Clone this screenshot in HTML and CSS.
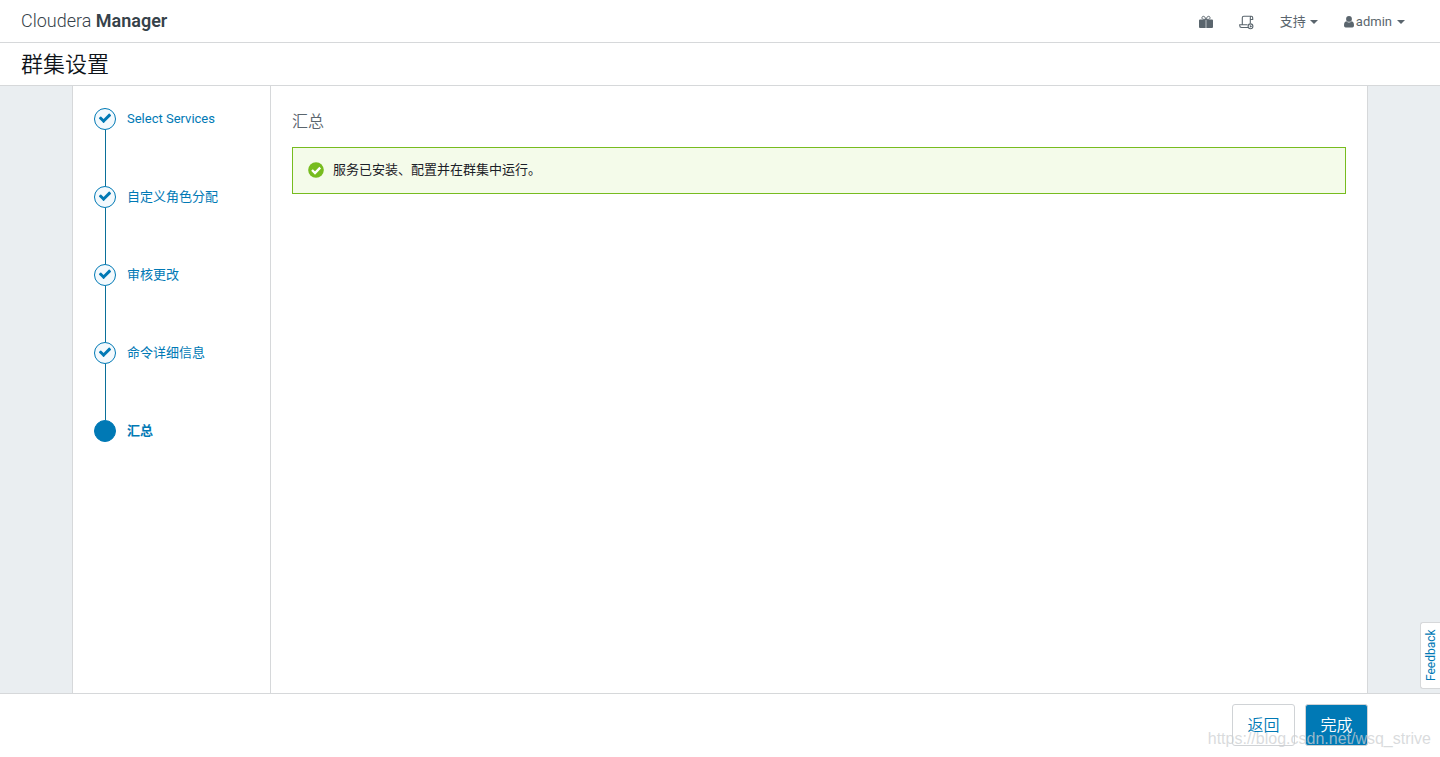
FILE: index.html
```
<!DOCTYPE html>
<html lang="zh-CN">
<head>
<meta charset="utf-8">
<title>群集设置 - Cloudera Manager</title>
<link rel="stylesheet" href="styles.css">
</head>
<body>
<svg class="sprite" aria-hidden="true">
  <symbol id="check" viewBox="0 0 1792 1792"><path d="M1671 566q0 40-28 68l-724 724-136 136q-28 28-68 28t-68-28l-136-136-362-362q-28-28-28-68t28-68l136-136q28-28 68-28t68 28l294 295 656-657q28-28 68-28t68 28l136 136q28 28 28 68z"/></symbol>
</svg>
<header class="topbar">
  <a class="brand" href="#">Cloudera <strong>Manager</strong></a>
  <nav class="tools">
    <button class="tool tool-gift" type="button" aria-label="Parcel">
      <svg width="14" height="14" viewBox="0 0 14 14" aria-hidden="true"><path fill="currentColor" d="M0 5.6Q0 4.500 1 4.500H6.700V13H1Q0 13 0 12ZM7.300 4.500H13Q14 4.500 14 5.600V12Q14 13 13 13H7.300Z"/><path fill="none" stroke="currentColor" d="M7 4.500C6.500 2.500 5.500 1.300 4.300 1.300C2.500 1.300 2.500 4.300 4.500 4.300H9.500C11.500 4.300 11.500 1.300 9.700 1.300C8.500 1.300 7.500 2.500 7 4.500Z"/></svg>
    </button>
    <button class="tool tool-cmd" type="button" aria-label="Commands">
      <svg width="15" height="15" viewBox="0 0 15 15" aria-hidden="true"><g fill="none" stroke="currentColor" stroke-width="1.1"><path d="M3.300 9.500V2.800Q3.300 1.300 4.800 1.300H12.300Q13.700 1.300 13.700 2.800V4.500H11.300V2.800Q11.300 1.300 12.300 1.300M11.300 4.500V8.500M8.500 9.700H.7V10.500Q.7 12.500 2.500 12.500H9"/><circle cx="11.500" cy="11.300" r="2.400"/></g><path fill="currentColor" d="M10.800 9.900 13.300 11.300 10.800 12.700Z"/></svg>
    </button>
    <button class="tool tool-support" type="button">支持<span class="caret"></span></button>
    <button class="tool tool-user" type="button">
      <svg width="10" height="12" viewBox="0 0 10 12" aria-hidden="true"><path fill="currentColor" d="M5 0A2.900 2.900 0 1 1 5 5.800 2.900 2.900 0 0 1 5 0ZM2.300 5.200Q5 7.600 7.700 5.200Q10 5.500 10 9.500Q10 11.500 8.300 11.500H1.700Q0 11.500 0 9.500Q0 5.500 2.300 5.200Z"/></svg>
      <span>admin</span><span class="caret"></span>
    </button>
  </nav>
</header>
<div class="titlebar"><h1>群集设置</h1></div>
<div class="stage">
  <div class="wizard">
    <aside class="sidebar">
      <ol class="steps">
        <li class="step"><span class="dot"><svg viewBox="0 0 1792 1792"><use href="#check"/></svg></span><a href="#">Select Services</a></li>
        <li class="step"><span class="dot"><svg viewBox="0 0 1792 1792"><use href="#check"/></svg></span><a href="#">自定义角色分配</a></li>
        <li class="step"><span class="dot"><svg viewBox="0 0 1792 1792"><use href="#check"/></svg></span><a href="#">审核更改</a></li>
        <li class="step"><span class="dot"><svg viewBox="0 0 1792 1792"><use href="#check"/></svg></span><a href="#">命令详细信息</a></li>
        <li class="step current"><span class="dot"></span><a href="#" aria-current="step">汇总</a></li>
      </ol>
    </aside>
    <main class="content">
      <h2>汇总</h2>
      <div class="alert" role="status">
        <svg width="16" height="16" viewBox="0 0 16 16" aria-hidden="true"><circle cx="8" cy="8" r="7.800" fill="#77bc1f"/><path d="M4 8 7 11 12.200 5.700" fill="none" stroke="#fff" stroke-width="2.400"/></svg>
        <span>服务已安装、配置并在群集中运行。</span>
      </div>
    </main>
  </div>
  <button class="feedback" type="button">Feedback</button>
</div>
<footer class="actions">
  <button class="btn" type="button">返回</button>
  <button class="btn primary" type="button">完成</button>
  <span class="watermark">https://blog.csdn.net/wsq_strive</span>
</footer>
</body>
</html>
```
FILE: styles.css
```
* { box-sizing: border-box; }
body {
  margin: 0;
  min-height: 100vh;
  display: flex;
  flex-direction: column;
  background: #fff;
  color: #1b2027;
  font: 13px/20px Roboto, "Noto Sans CJK SC", sans-serif;
}
button { font: inherit; color: inherit; background: none; border: 0; padding: 0; cursor: pointer; }
a { color: inherit; text-decoration: none; }
.sprite { position: absolute; width: 0; height: 0; }

.topbar {
  display: flex;
  align-items: center;
  justify-content: space-between;
  height: 43px;
  padding: 0 35px 0 21px;
  border-bottom: 1px solid #d6d8da;
}
.brand { color: #36424a; font-size: 18px; font-weight: 300; }
.brand strong { font-weight: 600; }
.tools { display: flex; align-items: center; gap: 26px; padding-top: 2px; color: #5a656d; }
.tool { display: flex; align-items: center; }
.tool-user { gap: 2px; }
.caret {
  margin-left: 4px;
  border: 4px solid transparent;
  border-top-color: currentColor;
  border-bottom: 0;
}
.tool-user .caret { margin-left: 3px; }

.titlebar { padding: 1px 21px 0; border-bottom: 1px solid #d6d8da; }
.titlebar h1 { margin: 0; font-size: 22px; line-height: 41px; font-weight: 350; color: #0f141a; }

.stage { position: relative; flex: 1; display: flex; padding: 0 5%; background: #eaeef1; }
.wizard { flex: 1; display: flex; background: #fff; border: solid #d6d8da; border-width: 0 1px; }
.sidebar { width: 198px; padding: 22px 21px; border-right: 1px solid #d6d8da; }
.steps { margin: 0; padding: 0; list-style: none; }
.step {
  position: relative;
  display: flex;
  gap: 11px;
  height: 78px;
  color: #0079b5;
  line-height: 22px;
}
.step::before {
  content: "";
  position: absolute;
  top: 22px;
  bottom: 0;
  left: 11px;
  width: 1px;
  background: #0b7099;
}
.step:last-child::before { display: none; }
.dot {
  display: grid;
  place-items: center;
  width: 22px;
  height: 22px;
  border: 1px solid #0079b5;
  border-radius: 50%;
  background: #f3f9fd;
}
.dot svg { width: 14px; height: 14px; margin-bottom: 2px; fill: #0079b5; }
.current { font-weight: 700; }
.current .dot { background: #0079b5; }

.content { flex: 1; padding: 26px 21px; }
.content h2 { margin: 0 0 15px; color: #5a656d; font-size: 16px; line-height: 20px; font-weight: 350; }
.alert {
  display: flex;
  align-items: center;
  gap: 9px;
  padding: 12px 15px 13px;
  border: 1px solid #77bc1f;
  background: #f4fbea;
}

.feedback {
  position: absolute;
  right: 0;
  bottom: 4px;
  width: 20px;
  height: 67px;
  border: 1px solid #d6d8da;
  border-left: 0;
  border-radius: 0 3px 3px 0;
  background: #fff;
  color: #0079b5;
  font-size: 12px;
  line-height: 18px;
  writing-mode: vertical-rl;
  transform: rotate(180deg);
}

.actions {
  position: relative;
  display: flex;
  justify-content: flex-end;
  gap: 10px;
  padding: 10px 5% 11px;
  border-top: 1px solid #d6d8da;
}
.btn {
  min-width: 63px;
  height: 42px;
  padding: 2px 14px 0;
  border: 1px solid #d0d3d6;
  border-radius: 3px;
  background: #fff;
  color: #0079b5;
  font-size: 16px;
  font-weight: 350;
  line-height: 38px;
}
.primary { background: #0079b5; color: #fff; }
.watermark {
  position: absolute;
  right: 9px;
  bottom: 8px;
  color: rgba(205, 207, 210, .75);
  font: 16px/20px "Liberation Sans", Arial, sans-serif;
  pointer-events: none;
}
```
